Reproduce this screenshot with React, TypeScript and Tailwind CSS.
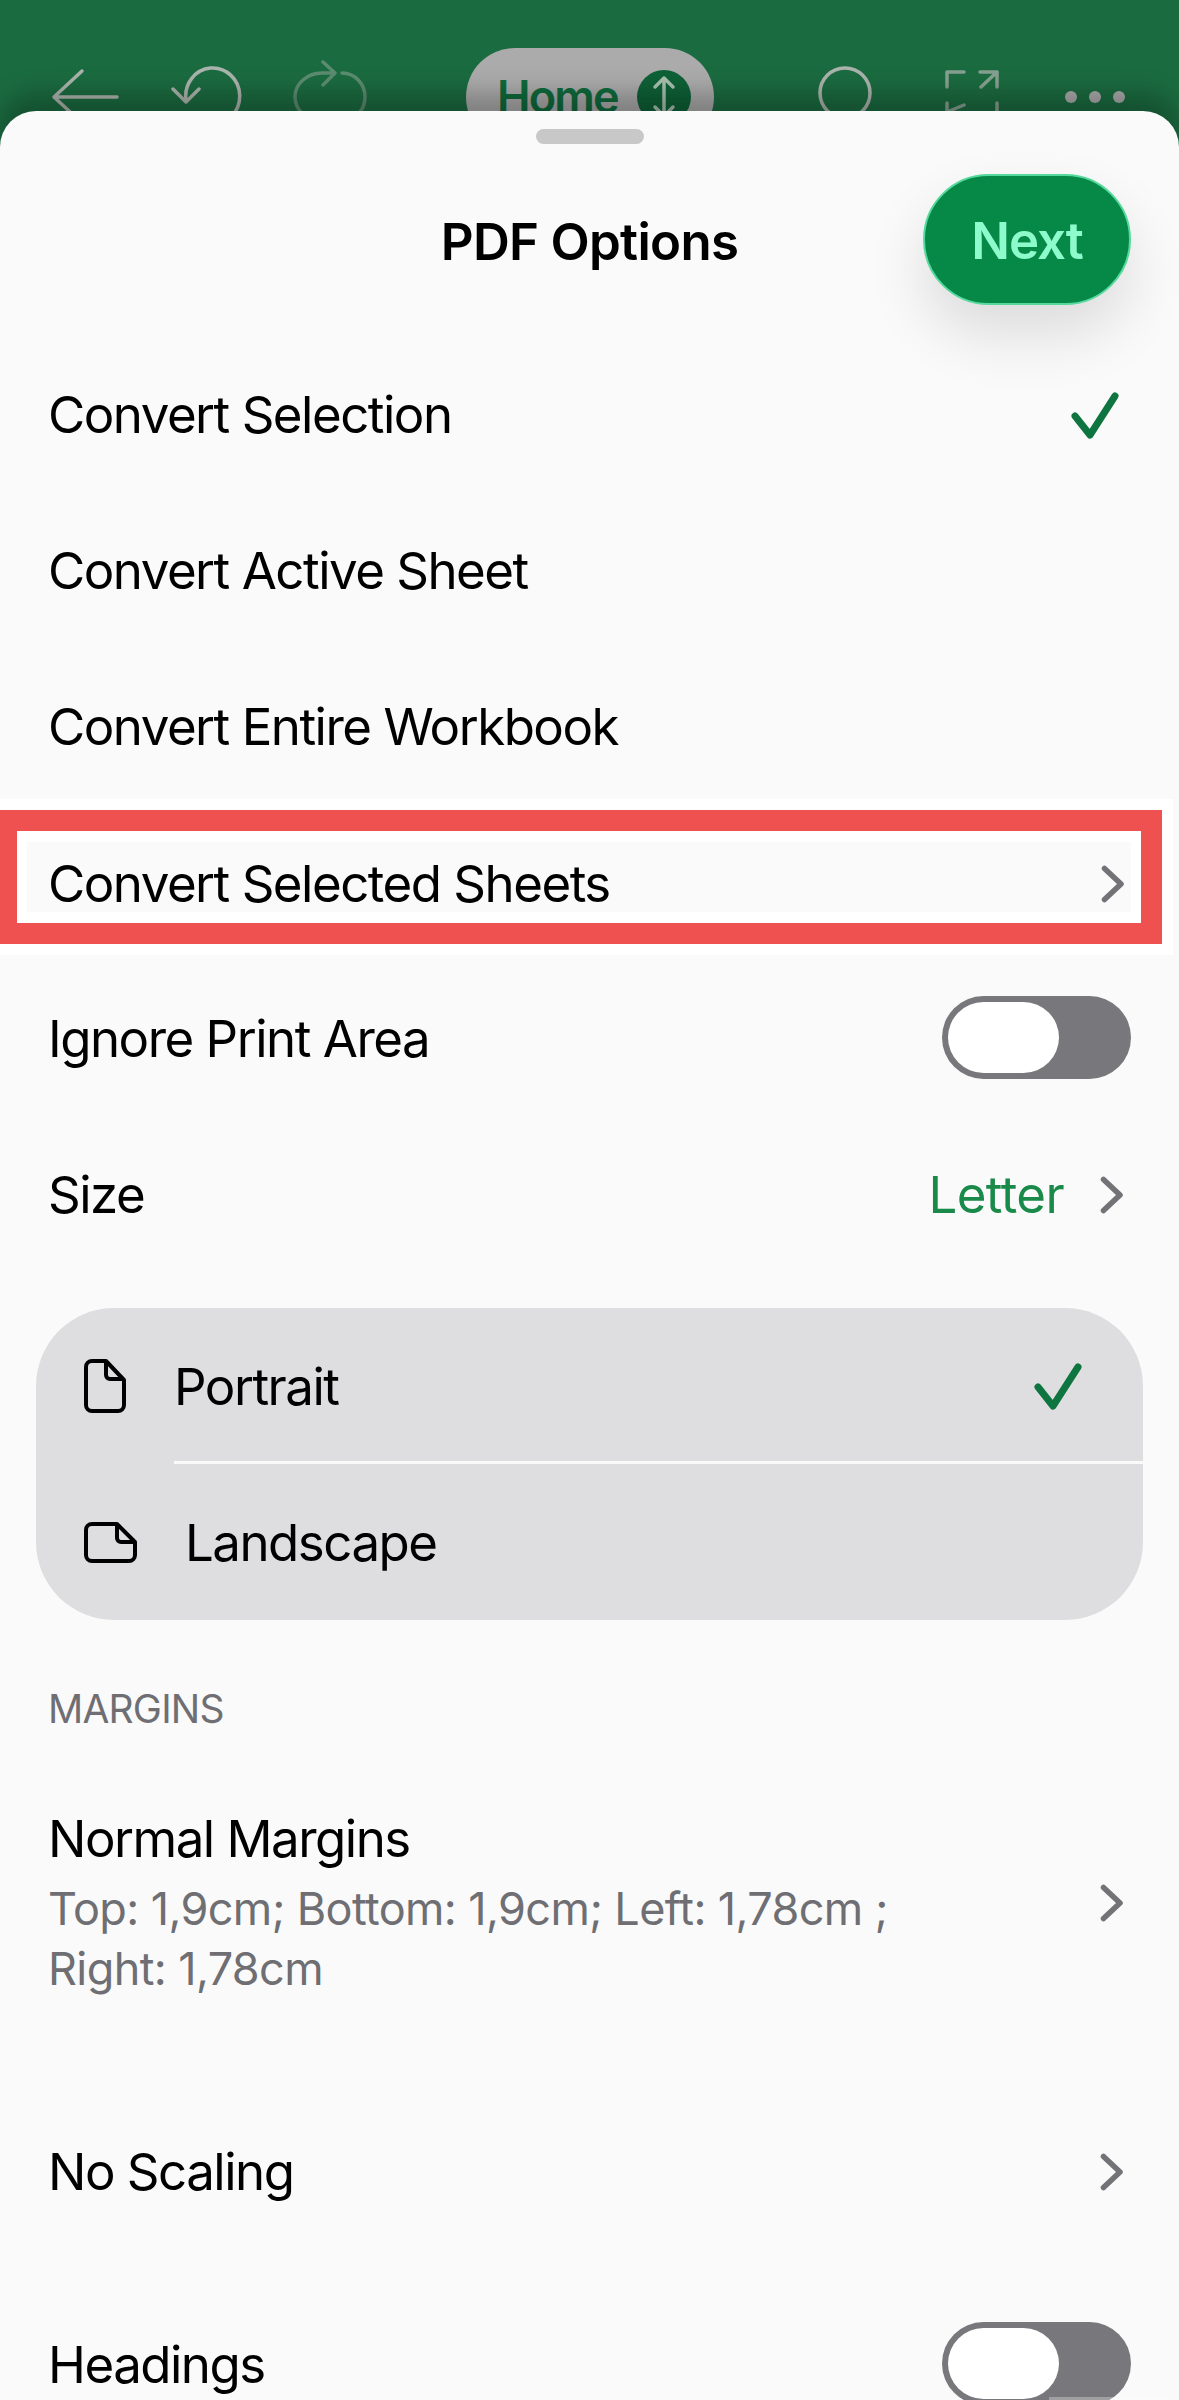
import React from 'react';

const Chevron = () => (
  <svg width="24" height="38" viewBox="0 0 24 38" fill="none" className="shrink-0">
    <path d="M3.5 3.5 L20 19 L3.5 34.5" stroke="#727277" strokeWidth="5.5" strokeLinecap="round" strokeLinejoin="round" />
  </svg>
);

const Check = () => (
  <svg width="48" height="47" viewBox="0 0 48 47" fill="none" className="shrink-0">
    <path d="M4 24 L19 43 L44 4" stroke="#0e7540" strokeWidth="7" strokeLinecap="round" strokeLinejoin="round" />
  </svg>
);

const Toggle = () => (
  <div className="-mr-[7px] -mt-[3px] flex h-[83px] w-[189px] shrink-0 items-center rounded-full bg-[#78787c] pl-[6px]">
    <div className="h-[71px] w-[111px] rounded-full bg-white" />
  </div>
);

const Row = ({ label, right }: { label: string; right?: React.ReactNode }) => (
  <div className="flex h-[156px] items-center justify-between pl-[48px] pr-[55px]">
    <span>{label}</span>
    {right}
  </div>
);

const stroke = { stroke: '#aab4ac', strokeWidth: 3.5, strokeLinecap: 'round' as const, strokeLinejoin: 'round' as const, fill: 'none' };

const TopBar = () => (
  <div className="flex h-[194px] items-center bg-[#1b6b40] pl-[51px]">
    <svg width="70" height="80" viewBox="51 57 70 80">
      <path d="M117 97 H54 M82 71 L54 97 L82 123" {...stroke} />
    </svg>
    <svg width="72" height="80" viewBox="171 57 72 80" className="ml-[50px]">
      <path d="M186 100 A27 28 0 1 1 212 124 M173 89 L186 102 L199 89" {...stroke} />
    </svg>
    <svg width="74" height="80" viewBox="293 57 74 80" className="ml-[50px] opacity-45">
      <path d="M334 73 H322 A27 24 0 0 0 295 97 A27 24 0 0 0 322 121 M323 62 L335 73 L323 85 M342 73 A23 24 0 0 1 365 97 A23 24 0 0 1 342 121" {...stroke} />
    </svg>
    <div className="ml-[99px] flex h-[98px] w-[248px] items-center rounded-full bg-[#ababab] pl-[31px] text-[45px] font-semibold tracking-[-1.8px] text-[#0f6a3c]">
      <span className="w-[140px]">Home</span>
      <div className="flex h-[54px] w-[54px] items-center justify-center rounded-full bg-[#0e6137]">
        <svg width="24" height="44" viewBox="0 0 24 44" fill="none" stroke="#a8c0b0" strokeWidth="3.5" strokeLinecap="round" strokeLinejoin="round">
          <path d="M12 3 V41 M3 12 L12 3 L21 12 M3 32 L12 41 L21 32" />
        </svg>
      </div>
    </div>
    <svg width="70" height="80" viewBox="817 57 70 80" className="ml-[103px]">
      <circle cx="845" cy="93" r="25" {...stroke} />
      <path d="M864 112 L880 128" {...stroke} />
    </svg>
    <svg width="56" height="80" viewBox="944 57 56 80" className="ml-[57px] opacity-75">
      <path d="M947 87 V72 H964 M980 72 H997 V87 M997 72 L981 87 M947 103 V122 M947 112 L964 105 M997 103 V122" {...stroke} />
    </svg>
    <div className="ml-[65px] flex items-center gap-[12px]">
      <div className="h-[12px] w-[12px] rounded-full bg-[#a9a9a9]" />
      <div className="h-[12px] w-[12px] rounded-full bg-[#a9a9a9]" />
      <div className="h-[12px] w-[12px] rounded-full bg-[#a9a9a9]" />
    </div>
  </div>
);

export default function App() {
  return (
    <div className="h-[2400px] w-[1179px] overflow-hidden bg-[#fafafa] text-[51px] leading-[60px] tracking-[-1.5px] text-black" style={{ fontFamily: 'Inter, "Liberation Sans", sans-serif' }}>
      <TopBar />
      <div className="relative -mt-[83px] h-[2289px] rounded-t-[36px] bg-[#fafafa] shadow-[0_-18px_24px_rgba(0,0,0,0.25)]">
        <div className="pt-[18px]">
          <div className="mx-auto h-[15px] w-[108px] rounded-full bg-[#c8c8c8]" />
        </div>
        <div className="grid h-[193px] grid-cols-[1fr_auto_1fr] items-start px-[48px] pt-[30px]">
          <div />
          <div className="pt-[38px] font-semibold tracking-[-0.7px]">PDF Options</div>
          <button className="flex h-[131px] w-[208px] items-center justify-center justify-self-end rounded-full border-2 border-[#55d99c] bg-[#068847] pt-[3px] font-semibold tracking-[-1px] text-[#8dfbcb] shadow-[0_30px_60px_rgba(0,0,0,0.12)]">
            Next
          </button>
        </div>

        <Row label="Convert Selection" right={<div className="mr-[5px]"><Check /></div>} />
        <Row label="Convert Active Sheet" />
        <Row label="Convert Entire Workbook" />

        {/* red annotation around the row */}
        <div className="-mt-[6px] mb-[6px] h-[156px] w-[1173px] bg-white pt-[11px]">
          <div className="h-[134px] w-[1162px] border-y-[21px] border-l-[17px] border-r-[21px] border-[#ef5050] bg-white px-[10px] py-[11px]">
            <div className="flex h-[70px] items-center justify-between bg-[#fafafa] pl-[21px] pr-[6px] pt-[14px]">
              <span>Convert Selected Sheets</span>
              <Chevron />
            </div>
          </div>
        </div>

        <Row label="Ignore Print Area" right={<Toggle />} />
        <Row
          label="Size"
          right={
            <div className="flex items-center gap-[36px] text-[#1a8a4a]">
              <span className="tracking-[-0.6px]">Letter</span>
              <Chevron />
            </div>
          }
        />

        <div className="mx-[36px] mt-[35px] h-[312px] overflow-hidden rounded-[78px] bg-[#dedee0]">
          <div className="flex h-[156px] items-center pl-[48px] pr-[61px]">
            <svg width="42" height="54" viewBox="0 0 42 54" fill="none" stroke="#000" strokeWidth="4" strokeLinejoin="round" className="shrink-0">
              <path d="M8 2 H22 L40 21 V46 A6 6 0 0 1 34 52 H8 A6 6 0 0 1 2 46 V8 A6 6 0 0 1 8 2 Z" />
              <path d="M22 3 V16 A4 4 0 0 0 26 20 H39" />
            </svg>
            <span className="ml-[48px] flex-1 pt-[2px]">Portrait</span>
            <Check />
          </div>
          <div className="-mt-[3px] ml-[138px] h-[3px] bg-[#fafafa]" />
          <div className="flex h-[156px] items-center pl-[48px]">
            <svg width="53" height="41" viewBox="0 0 53 41" fill="none" stroke="#000" strokeWidth="4" strokeLinejoin="round" className="shrink-0">
              <path d="M8 2 H33 L51 20 V33 A6 6 0 0 1 45 39 H8 A6 6 0 0 1 2 33 V8 A6 6 0 0 1 8 2 Z" />
              <path d="M33 3 V16 A4 4 0 0 0 37 20 H50" />
            </svg>
            <span className="ml-[48px] pt-[2px]">Landscape</span>
          </div>
        </div>

        <div className="mt-[59px] h-[60px] pl-[48px] text-[39px] tracking-[-0.8px] text-[#6e6e73]">MARGINS</div>

        <div className="mt-[70px] flex items-center justify-between pl-[48px] pr-[55px]">
          <div>
            <div>Normal Margins</div>
            <div className="mt-[10px] w-[900px] text-[45px] tracking-[-0.6px] text-[#6e6e73]">
              Top: 1,9cm; Bottom: 1,9cm; Left: 1,78cm ;
              <br />
              Right: 1,78cm
            </div>
          </div>
          <div className="-mt-[2px]"><Chevron /></div>
        </div>

        <div className="mt-[95px]">
          <Row label="No Scaling" right={<Chevron />} />
        </div>
        <div className="mt-[37px]">
          <Row label="Headings" right={<Toggle />} />
        </div>
        <div className="absolute bottom-0 right-[11px] h-[3px] w-[119px] bg-white/30" />
      </div>
    </div>
  );
}
